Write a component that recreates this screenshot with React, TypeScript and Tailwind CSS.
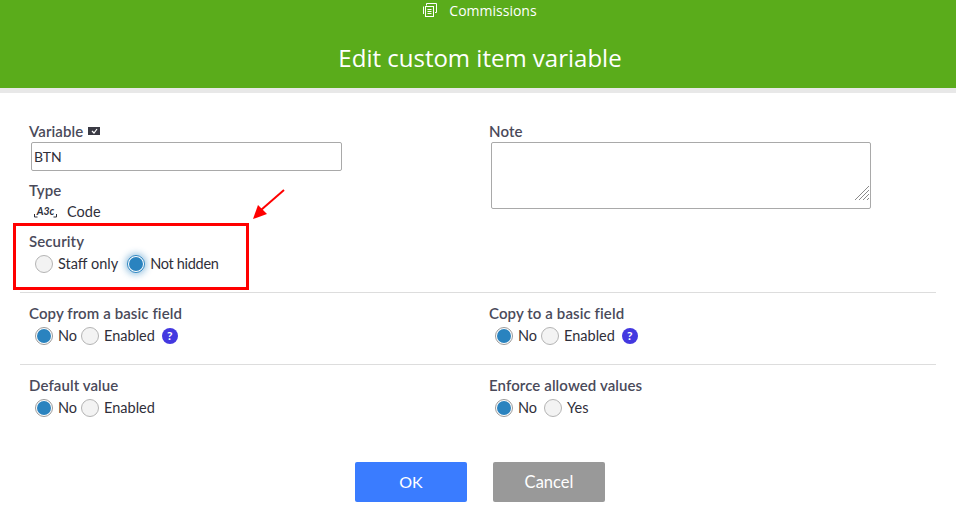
import React from 'react';

const font = {
  label: 'text-[15px] leading-[18px] font-semibold tracking-[0.1px] text-[#4a4a5a]',
  value: 'text-[14.5px] leading-[18px] text-[#2f2f3a]',
};

const Radio = ({ checked, glow, label }: { checked?: boolean; glow?: boolean; label: string }) => (
  <div className="flex items-center gap-[5px]">
    <div
      className={`w-[18px] h-[18px] rounded-full border flex items-center justify-center ${
        glow
          ? 'border-[#2e86c1] bg-white shadow-[0_0_6px_2px_rgba(46,134,193,0.45)]'
          : checked
            ? 'border-[#9a9a9a] bg-white'
            : 'border-[#b4b4b4] bg-[#f3f3f3]'
      }`}
    >
      {checked && <div className="w-[14px] h-[14px] rounded-full bg-[#2a83bf]" />}
    </div>
    <span className={`${font.value} ${glow ? 'tracking-[-0.3px]' : ''}`}>{label}</span>
  </div>
);

const Help = () => (
  <div className="w-4 h-4 ml-[3px] rounded-full bg-[#4338e0] text-white text-[12px] font-bold flex items-center justify-center">?</div>
);

const Field = ({ label, children, gap = 'gap-[4px]' }: { label: string; children: React.ReactNode; gap?: string }) => (
  <div>
    <div className={font.label}>{label}</div>
    <div className={`flex items-center ${gap} pl-[6px] mt-[5px]`}>{children}</div>
  </div>
);

export default function App() {
  return (
    <div className="relative w-[956px] h-[508px] overflow-hidden bg-white font-['Lato','Noto_Sans',sans-serif]">
      {/* Header */}
      <div className="h-[88px] pl-[4px] bg-[#5aac1b] text-white font-['Open_Sans',sans-serif] flex flex-col items-center">
        <div className="flex items-center gap-[12px] h-[20px] text-[14px]">
          <svg width="14" height="14" viewBox="0 0 14 14" fill="none" stroke="white" strokeWidth="1">
            <path d="M3.5 2.5V.5h10v9H12" />
            <path d="M.5 3.5V11" />
            <rect x="2.5" y="3.5" width="8" height="10" fill="#5aac1b" />
            <path d="M4.5 6.5h4M4.5 8.500h4M4.500 10.500h4" />
          </svg>
          <span>Commissions</span>
        </div>
        <div className="text-[24px] leading-[32px] mt-[22px]">Edit custom item variable</div>
      </div>
      <div className="h-[5px] bg-[#e8e8e8]" />

      {/* Form */}
      <div className="px-[20px]">
        <div className="grid grid-cols-[460px_1fr] pt-[29px] px-[9px] h-[200px] border-b border-[#dddddd]">
          <div>
            <div className={`${font.label} flex items-center gap-[5px]`}>
              Variable
              <svg width="12" height="8" viewBox="0 0 12 8">
                <rect width="12" height="8" fill="#3a3a44" />
                <path d="M4 4l2 2 3-4" stroke="white" strokeWidth="1.2" fill="none" />
              </svg>
            </div>
            <input
              readOnly
              value="BTN"
              className="block mt-[2px] ml-[2px] w-[311px] h-[29px] px-[2px] border border-[#a9a9a9] rounded-[2px] text-[14px] text-[#2f2f3a] outline-none"
            />
            <div className={`${font.label} mt-[10px]`}>Type</div>
            <div className="flex items-center gap-[10px] pl-[5px] mt-[4px]">
              <svg width="23" height="12" viewBox="0 0 23 12" fill="none">
                <path d="M.5 8v3h3M22.500 8v3h-3" stroke="#2f2f3a" />
                <text x="11.5" y="9" textAnchor="middle" fontSize="10.500" fontWeight="700" fontStyle="italic" fill="#2f2f3a">A3c</text>
              </svg>
              <span className={font.value}>Code</span>
            </div>
            <div className={`${font.label} mt-[11px]`}>Security</div>
            <div className="flex items-center gap-[9px] pl-[6px] mt-[5px]">
              <Radio label="Staff only" />
              <Radio checked glow label="Not hidden" />
            </div>
          </div>
          <div className="relative">
            <div className={font.label}>Note</div>
            <textarea
              readOnly
              className="block mt-[2px] ml-[2px] w-[380px] h-[67px] border border-[#a9a9a9] rounded-[2px] outline-none resize-none"
            />
            <svg className="absolute left-[366px] top-[64px]" width="14" height="14" viewBox="0 0 14 14" stroke="#8a8a8a" strokeWidth="1">
              <path d="M0 14L14 0M4 14L14 4M8 14L14 8M12 14L14 12" />
            </svg>
          </div>
        </div>

        <div className="grid grid-cols-[460px_1fr] px-[9px] pt-[11px] h-[72px] border-b border-[#dddddd]">
          <Field label="Copy from a basic field">
            <Radio checked label="No" />
            <Radio label="Enabled" />
            <Help />
          </Field>
          <Field label="Copy to a basic field">
            <Radio checked label="No" />
            <Radio label="Enabled" />
            <Help />
          </Field>
        </div>

        <div className="grid grid-cols-[460px_1fr] px-[9px] pt-[11px] h-[72px]">
          <Field label="Default value">
            <Radio checked label="No" />
            <Radio label="Enabled" />
          </Field>
          <Field label="Enforce allowed values" gap="gap-[7px]">
            <Radio checked label="No" />
            <Radio label="Yes" />
          </Field>
        </div>

        <div className="flex justify-center gap-[26px] pl-[4px] mt-[25px]">
          <button className="w-[112px] h-[40px] rounded-[2px] bg-[#3a7cff] text-white text-[16px]">OK</button>
          <button className="w-[112px] h-[40px] rounded-[2px] bg-[#999999] text-white text-[16.500px]">Cancel</button>
        </div>
      </div>

      {/* Annotation */}
      <div className="absolute left-[13px] top-[223px] w-[236px] h-[67px] border-[3px] border-[#ff0000]" />
      <svg className="absolute left-[250px] top-[186px]" width="38" height="36" viewBox="0 0 38 36">
        <path d="M34 4L11 24" stroke="#ff0000" strokeWidth="2" />
        <path d="M3 33L8 19L17 28Z" fill="#ff0000" />
      </svg>
    </div>
  );
}
